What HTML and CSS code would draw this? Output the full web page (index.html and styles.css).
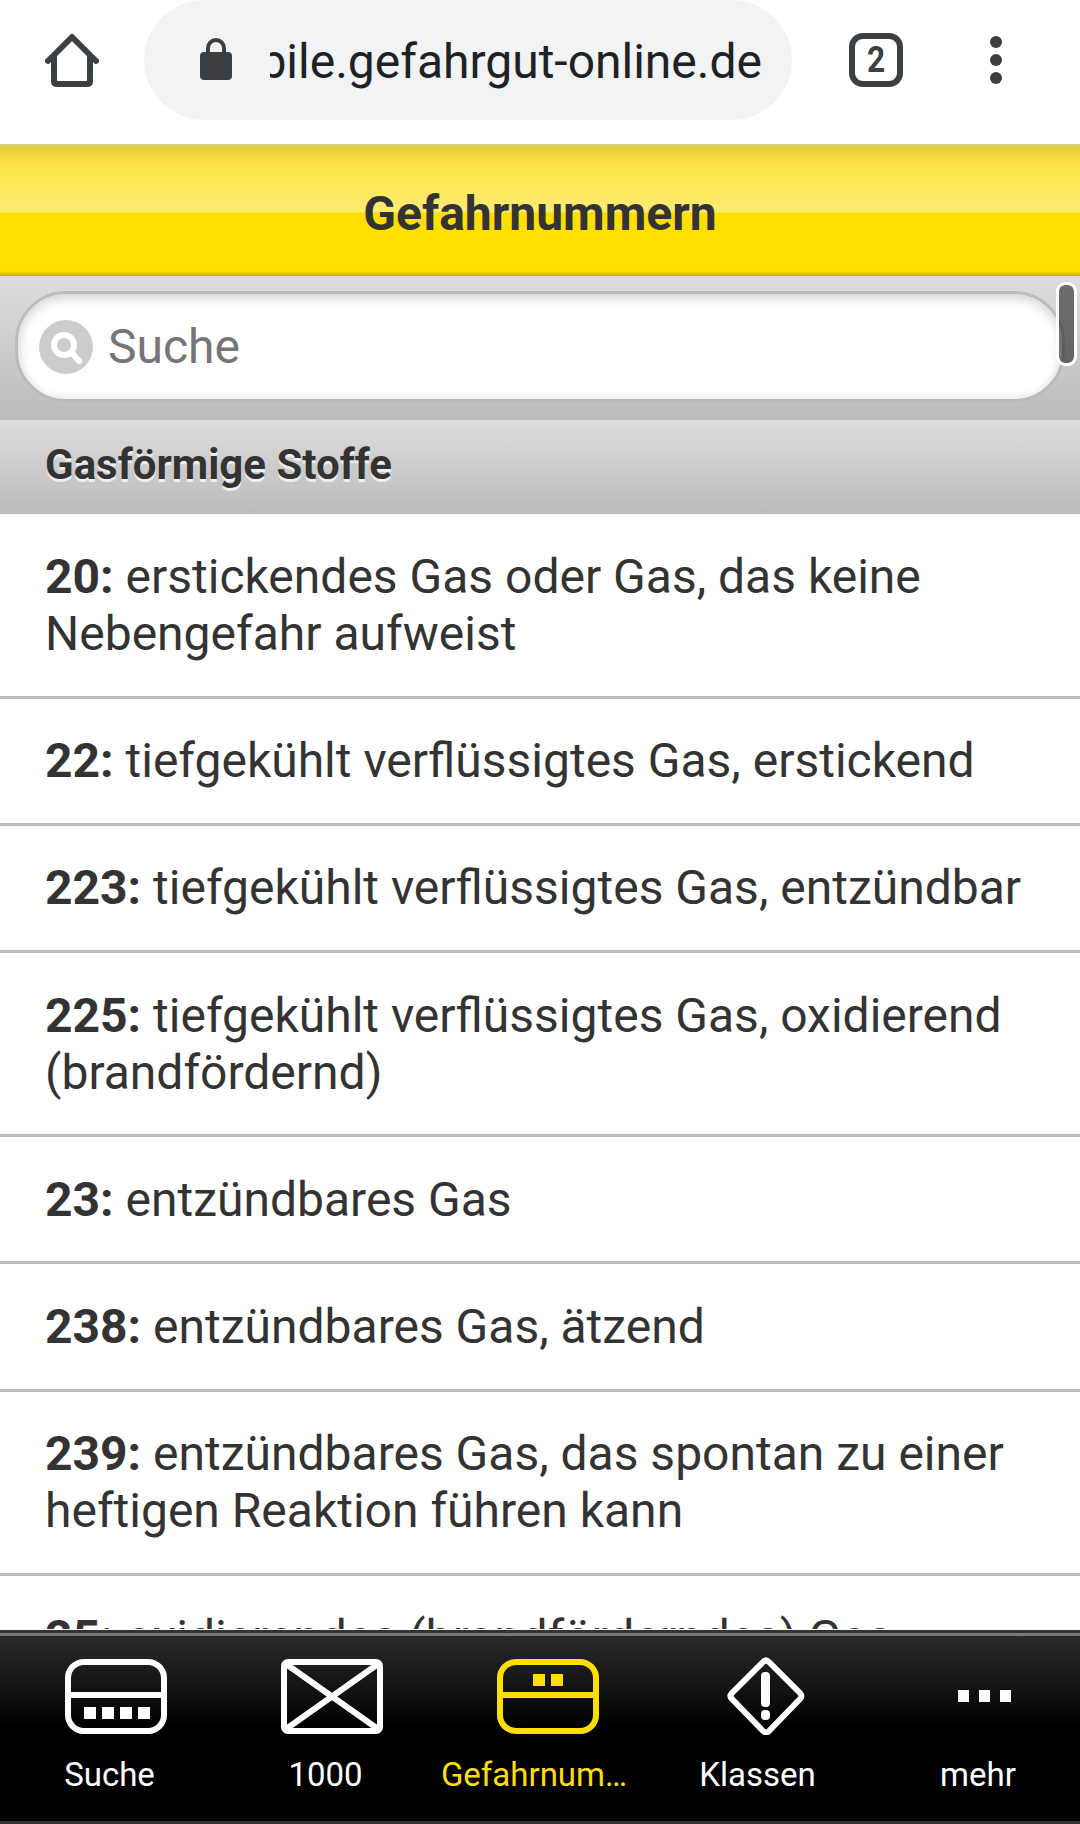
FILE: index.html
```html
<!DOCTYPE html>
<html lang="de">
  <head>
    <meta charset="UTF-8" />
    <title>Gefahrnummern</title>
    <link rel="stylesheet" href="styles.css">
  </head>

  <body>
    <div class="page">
      <!-- browser toolbar -->
      <div class="toolbar">
        <svg class="home" width="54" height="54" viewBox="0 0 54 54">
          <path d="M3 28 L27 4 L51 28 M9 24 V48 Q9 51 12 51 H42 Q45 51 45 48 V24" />
        </svg>
        <div class="url-bar">
          <svg class="lock" width="32" height="42" viewBox="0 0 32 42">
            <rect x="0" y="14" width="32" height="28" rx="4" />
            <path d="M8 16 V10 A8 8 0 0 1 24 10 V16" />
          </svg>
          <div class="url"><span>mobile.gefahrgut-online.de</span></div>
        </div>
        <div class="tabs"><span>2</span></div>
        <div class="menu"><i></i><i></i><i></i></div>
      </div>

      <div class="header">
        <h1>Gefahrnummern</h1>
      </div>

      <!-- list with filter -->
      <div class="content">
        <div class="filter">
          <div class="search">
            <svg width="54" height="54" viewBox="0 0 54 54">
              <circle class="disc" cx="27" cy="27" r="27" />
              <circle class="lens" cx="25" cy="25" r="10" />
              <path class="lens" d="M33 33 L40 41" />
            </svg>
            <span>Suche</span>
          </div>
        </div>
        <h2 class="divider">Gasförmige Stoffe</h2>
        <ul class="list">
          <li><b>20:</b> erstickendes Gas oder Gas, das keine Nebengefahr aufweist</li>
          <li><b>22:</b> tiefgekühlt verflüssigtes Gas, erstickend</li>
          <li><b>223:</b> tiefgekühlt verflüssigtes Gas, entzündbar</li>
          <li><b>225:</b> tiefgekühlt verflüssigtes Gas, oxidierend (brandfördernd)</li>
          <li><b>23:</b> entzündbares Gas</li>
          <li><b>238:</b> entzündbares Gas, ätzend</li>
          <li><b>239:</b> entzündbares Gas, das spontan zu einer heftigen Reaktion führen kann</li>
          <li><b>25:</b> oxidierendes (brandförderndes) Gas</li>
        </ul>
        <div class="thumb"></div>
      </div>

      <!-- bottom navigation -->
      <div class="footer">
        <a class="nav suche">
          <svg width="102" height="78" viewBox="0 0 102 78">
            <rect x="3" y="5" width="96" height="69" rx="16" />
            <path d="M3 38 H99" />
            <path class="fill" d="M19 50h12v12h-12z M37 50h12v12h-12z M55 50h12v12h-12z M73 50h12v12h-12z" />
          </svg>
          <span>Suche</span>
        </a>
        <a class="nav un">
          <svg width="102" height="78" viewBox="0 0 102 78">
            <rect x="3" y="5" width="96" height="69" rx="4" />
            <path d="M5 7 L97 72 M97 7 L5 72" />
          </svg>
          <span>1000</span>
        </a>
        <a class="nav gefahr active">
          <svg width="102" height="78" viewBox="0 0 102 78">
            <rect x="3" y="5" width="96" height="69" rx="16" />
            <path d="M3 38 H99" />
            <path class="fill" d="M36 17h12v12h-12z M54 17h12v12h-12z" />
          </svg>
          <span>Gefahrnum…</span>
        </a>
        <a class="nav klassen">
          <svg width="78" height="78" viewBox="0 0 78 78">
            <path d="M36 5 Q39 2 42 5 L73 36 Q76 39 73 42 L42 74 Q39 77 36 74 L5 42 Q2 39 5 36 Z" />
            <rect class="fill" x="34" y="15" width="9" height="35" rx="4" />
            <rect class="fill" x="34" y="53" width="9" height="10" rx="4" />
          </svg>
          <span>Klassen</span>
        </a>
        <a class="nav mehr">
          <svg width="54" height="78" viewBox="0 0 54 78">
            <path class="fill" d="M0 33h11v12h-11z M21 33h11v12h-11z M42 33h11v12h-11z" />
          </svg>
          <span>mehr</span>
        </a>
      </div>
    </div>
  </body>
</html>
```

FILE: styles.css
```css
* {
  margin: 0;
  padding: 0;
  box-sizing: border-box;
}

ul {
  list-style: none;
}

.page {
  display: flex;
  flex-direction: column;
  width: 1080px;
  height: 1824px;
  overflow: hidden;
  background-color: #fff;
  color: #333;
  font-family: Roboto, "Liberation Sans", sans-serif;
  font-size: 48px;
}

/* toolbar */
.toolbar {
  display: flex;
  flex: none;
  align-items: center;
  height: 144px;
  padding: 0 78px 24px 45px;
}

.home {
  fill: none;
  stroke: #3c4043;
  stroke-width: 6;
  stroke-linecap: round;
  stroke-linejoin: round;
}

.url-bar {
  display: flex;
  align-items: center;
  width: 648px;
  height: 120px;
  margin-left: 45px;
  padding: 0 30px 0 56px;
  border-radius: 60px;
  background-color: #f1f3f4;
}

.lock {
  flex: none;
  margin: -2px 38px 0 0;
  fill: #3c4043;
}

.lock path {
  fill: none;
  stroke: #3c4043;
  stroke-width: 4;
}

/* long addresses are cut on the left */
.url {
  display: flex;
  flex: 1;
  justify-content: flex-end;
  overflow: hidden;
  color: #202124;
  line-height: 64px;
  margin-top: 4px;
  white-space: nowrap;
}

.tabs {
  width: 54px;
  height: 54px;
  margin-left: 57px;
  border: 6px solid #3c4043;
  border-radius: 14px;
  color: #3c4043;
  font-size: 36px;
  font-weight: bold;
  line-height: 43px;
  text-align: center;
}

.tabs span {
  display: block;
  transform: scaleX(0.88);
}

.menu {
  display: flex;
  flex-direction: column;
  gap: 6px;
  margin-left: auto;
}

.menu i {
  width: 12px;
  height: 12px;
  border-radius: 50%;
  background-color: #3c4043;
}

/* header */
.header {
  flex: none;
  height: 132px;
  background: linear-gradient(#dacf74 0, #dacf74 2px, #e2cb35 3px, #ecd434 8px, #fee448 20px, #fee84e 32px, #feeb74 68px, #ffde00 69px, #ffde00 127px, #eccd00 129px, #c9ad00 132px);
}

.header h1 {
  font-size: 48px;
  line-height: 140px;
  text-align: center;
}

/* content */
.content {
  position: relative;
  flex: none;
  height: 1353px;
  overflow: hidden;
}

.filter {
  height: 144px;
  padding: 15px;
  background: linear-gradient(#ddd, #bbb);
}

.search {
  display: flex;
  align-items: center;
  height: 111px;
  padding-left: 21px;
  border: 3px solid #bbb;
  border-radius: 51px;
  background-color: #fff;
  box-shadow: inset 0 3px 12px rgba(0, 0, 0, 0.2);
  color: #757575;
}

.search svg {
  margin-right: 15px;
}

.search .disc {
  fill: #ccc;
}

.search .lens {
  fill: none;
  stroke: #fff;
  stroke-width: 6;
  stroke-linecap: round;
}

.divider {
  height: 94.4px;
  padding-left: 45px;
  background: linear-gradient(#ddd, #bbb);
  font-size: 42px;
  line-height: 90px;
  text-shadow: 0 3px 0 #eee;
}

.list li {
  padding: 33.6px 45px;
  border-bottom: 3px solid #bbb;
  line-height: 57px;
}

/* scrollbar thumb lies over the page */
.thumb {
  position: absolute;
  top: 6px;
  right: 3px;
  width: 21px;
  height: 84px;
  border: 3px solid #fff;
  border-radius: 9px;
  background-color: rgba(0, 0, 0, 0.5);
  background-clip: padding-box;
}

/* bottom navigation */
.footer {
  display: flex;
  flex: none;
  height: 194px;
  margin-top: 1px;
  border-top: 3px solid #333;
  border-bottom: 3px solid #333;
  background: linear-gradient(#777 0, #777 3px, #2a2a2a 3px, #000 96px);
}

.nav {
  display: flex;
  flex-direction: column;
  width: 216px;
  padding-top: 24px;
  color: #fff;
  font-size: 33px;
  text-align: center;
}

.nav svg {
  align-self: center;
  margin-left: 16px;
  fill: none;
  stroke: currentColor;
  stroke-width: 6;
}

.nav .fill {
  fill: currentColor;
  stroke: none;
}

.nav span {
  margin-top: 20px;
  padding-left: 3px;
  line-height: 40px;
  white-space: nowrap;
}

.nav.active {
  color: #ffde00;
}

.gefahr span {
  padding: 0 12px 0 0;
}

.klassen svg {
  margin-left: 19px;
}

.mehr svg {
  margin-left: 25px;
}

.mehr span {
  padding-left: 12px;
}
```
